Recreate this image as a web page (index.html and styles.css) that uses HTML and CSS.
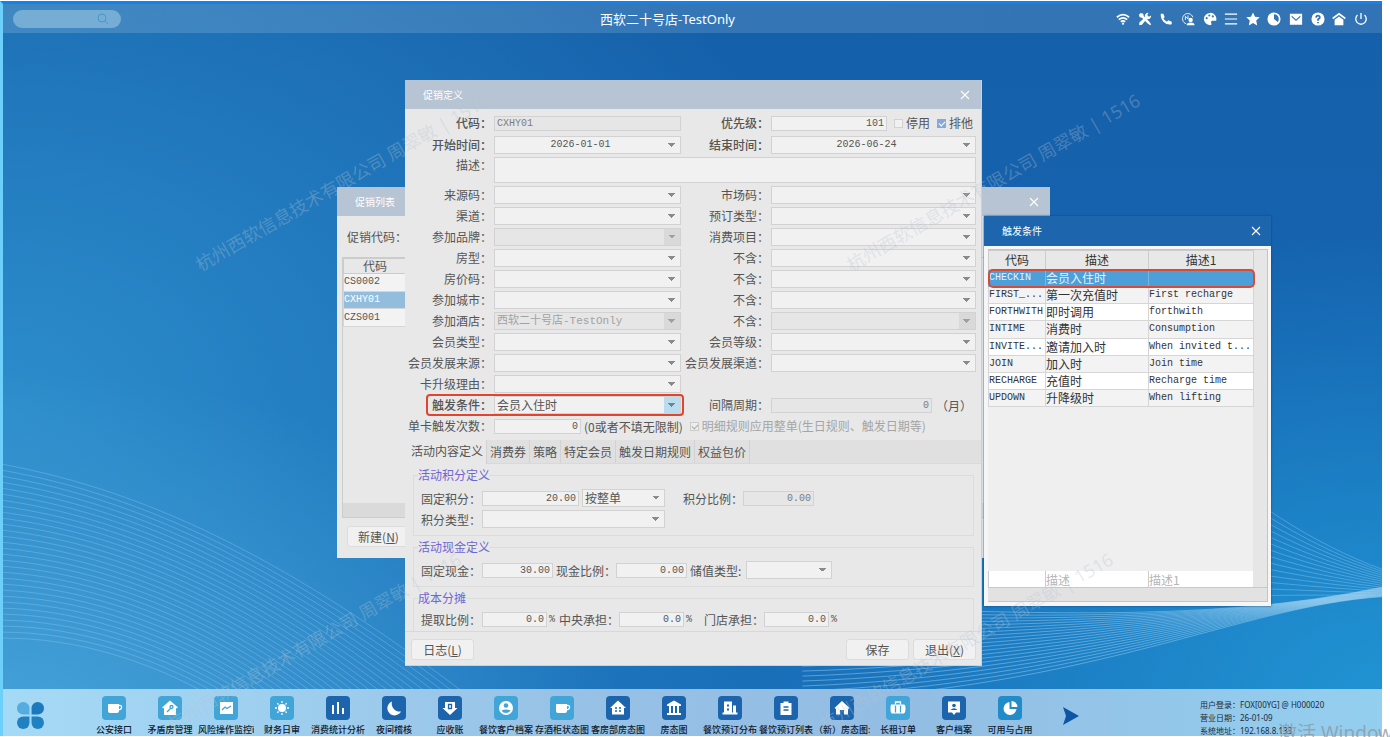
FILE: index.html
```html
<!DOCTYPE html>
<html lang="zh-CN">
<head>
<meta charset="utf-8">
<title>西软二十号店-TestOnly</title>
<link rel="stylesheet" href="styles.css">
</head>
<body>
<svg width="0" height="0" class="defs" aria-hidden="true">
  <symbol id="close" viewBox="0 0 10 10"><path d="M1 1l8 8M9 1l-8 8" fill="none" stroke="currentColor" stroke-width="1.1"/></symbol>
</svg>
<div class="desktop">
  <svg class="waves" id="waves" viewBox="0 0 1380 733" preserveAspectRatio="none" aria-hidden="true"></svg>

  <header class="topbar">
    <label class="search"><input type="search" aria-label="搜索"><svg viewBox="0 0 12 12"><circle cx="5" cy="5" r="4"/><path d="M8 8l3 3"/></svg></label>
    <h1>西软二十号店-TestOnly</h1>
    <nav class="tools">
      <button aria-label="网络"><svg viewBox="0 0 16 16"><path class="s" d="M1 6q7-6 14 0M3.2 8.7q4.800-4 9.600 0M5.500 11.200q2.500-2 5 0"/><circle cx="8" cy="13.300" r="1.300"/></svg></button>
      <button aria-label="设置"><svg viewBox="0 0 16 16"><path d="M1 3l2-2 3 1 .5 2.500L13 11l2 3-1 1-3-2-6.500-6.500L2 6zM15 4a3.800 3.800 0 0 1-5 4L4.500 14.500 1.500 15 1.500 12 8 6a3.800 3.800 0 0 1 4-5l-1.500 2.500 2 2z"/></svg></button>
      <button aria-label="电话"><svg viewBox="0 0 16 16"><path d="M2 2h3l1.500 4L5 7.500Q6.500 10 9 11l1.500-1.500L14.500 11v3q-6 1-9.500-3T2 2z"/></svg></button>
      <button aria-label="客服"><svg viewBox="0 0 16 16"><path class="s t" d="M6 13.500A6 6 0 1 1 13.500 6M5 9V5l3 3V4"/><circle cx="11" cy="9" r="2.500"/><path d="M6.500 15q0-3 4.500-3t4.500 3z"/></svg></button>
      <button aria-label="主题"><svg viewBox="0 0 16 16"><path fill-rule="evenodd" d="M8 1a7 7 0 1 0 0 14c2 0 2-1.500 1.300-2.500-.6-1.500.5-2.500 2-2.500H15A7 7 0 0 0 8 1zM3 7a1.200 1.200 0 1 1 2.400 0A1.200 1.200 0 0 1 3 7zm3-3a1.200 1.200 0 1 1 2.400 0A1.200 1.200 0 0 1 6 4zm4 1a1.200 1.200 0 1 1 2.400 0A1.200 1.200 0 0 1 10 5z"/></svg></button>
      <button aria-label="菜单"><svg viewBox="0 0 16 16"><path class="s m" d="M1 2.500h14M1 8h14M1 13.500h14"/></svg></button>
      <button aria-label="收藏"><svg viewBox="0 0 16 16"><path d="M8 .5l2.300 5 5.400.6-4 3.700 1.100 5.500L8 12.600l-4.800 2.700 1.100-5.500-4-3.700 5.400-.6z"/></svg></button>
      <button aria-label="时间"><svg viewBox="0 0 16 16"><circle class="s" cx="8" cy="8" r="6.500"/><path d="M8 1.500a6.500 6.500 0 1 0 5 10.500L8 8z"/></svg></button>
      <button aria-label="邮件"><svg viewBox="0 0 16 16"><path fill-rule="evenodd" d="M1 2h14v12.500H1zM3 4l5 4.500L13 4v1.800L8 10.200 3 5.800z"/></svg></button>
      <button aria-label="帮助"><svg viewBox="0 0 16 16"><circle cx="8" cy="8" r="7.500"/><path class="s d" d="M5.800 6.500Q6 4 8 4t2.200 2Q10.200 7 8 8.500V10M8 11.300v1.500"/></svg></button>
      <button aria-label="首页"><svg viewBox="0 0 16 16"><path class="s" d="M.8 7.500L8 2l7.200 5.500"/><path d="M3 8.800L8 5l5 3.800V15H3z"/></svg></button>
      <button aria-label="退出"><svg viewBox="0 0 16 16"><path class="s p" d="M4 3.500a6 6 0 1 0 8 0M8 1v7"/></svg></button>
    </nav>
  </header>

  <section class="window list-win">
    <div class="bar"><h2>促销列表</h2><button aria-label="关闭"><svg><use href="#close"/></svg></button></div>
    <div class="list-body">
      <span class="list-label">促销代码：</span>
      <div class="list-box">
        <table>
          <thead><tr><th>代码</th></tr></thead>
          <tbody><tr><td>CS0002</td></tr><tr class="sel"><td>CXHY01</td></tr><tr><td>CZS001</td></tr></tbody>
        </table>
        <div class="hbar"></div>
      </div>
      <button class="btn">新建(<u>N</u>)</button>
    </div>
  </section>

  <section class="window dialog">
    <div class="bar"><h2>促销定义</h2><button aria-label="关闭"><svg><use href="#close"/></svg></button></div>
    <form>
      <div class="fields">
        <label class="b" for="code">代码：</label><input id="code" class="low" value="CXHY01" disabled>
        <label class="b" for="prio">优先级：</label>
        <div class="line"><input id="prio" class="low num grow" value="101">
          <input type="checkbox" id="stop"><label for="stop">停用</label>
          <input type="checkbox" id="excl" checked><label class="flag" for="excl">排他</label></div>
        <label class="b" for="from">开始时间：</label><select id="from" class="date"><option>2026-01-01</option></select>
        <label class="b" for="to">结束时间：</label><select id="to" class="date"><option>2026-06-24</option></select>
        <label for="desc" class="top">描述：</label><textarea id="desc"></textarea>
        <label for="f1">来源码：</label><select id="f1"></select>
        <label for="g1">市场码：</label><select id="g1"></select>
        <label for="f2">渠道：</label><select id="f2"></select>
        <label for="g2">预订类型：</label><select id="g2"></select>
        <label for="f3">参加品牌：</label><select id="f3" disabled></select>
        <label for="g3">消费项目：</label><select id="g3"></select>
        <label for="f4">房型：</label><select id="f4"></select>
        <label for="g4">不含：</label><select id="g4"></select>
        <label for="f5">房价码：</label><select id="f5"></select>
        <label for="g5">不含：</label><select id="g5"></select>
        <label for="f6">参加城市：</label><select id="f6"></select>
        <label for="g6">不含：</label><select id="g6"></select>
        <label for="f7">参加酒店：</label><select id="f7" class="mix" disabled><option>西软二十号店-TestOnly</option></select>
        <label for="g7">不含：</label><select id="g7" disabled></select>
        <label for="f8">会员类型：</label><select id="f8"></select>
        <label for="g8">会员等级：</label><select id="g8"></select>
        <label for="f9">会员发展来源：</label><select id="f9"></select>
        <label for="g9">会员发展渠道：</label><select id="g9"></select>
        <label for="f10">卡升级理由：</label><select id="f10"></select><span class="blank"></span>
        <div class="marked"><label class="b" for="trig">触发条件：</label><select id="trig" class="active"><option>会员入住时</option></select></div>
        <label for="gap">间隔周期：</label><div class="line"><input id="gap" class="low num w161" value="0" disabled><span class="month">（月）</span></div>
        <label for="cnt">单卡触发次数：</label>
        <div class="line span3"><input id="cnt" class="low num w87" value="0"><span class="note">(0或者不填无限制)</span>
          <input type="checkbox" id="whole" checked disabled><label class="dim" for="whole">明细规则应用整单(生日规则、触发日期等)</label></div>
      </div>

      <div class="tabs" role="tablist">
        <button type="button" role="tab" aria-selected="true">活动内容定义</button><button type="button" role="tab">消费券</button><button type="button" role="tab">策略</button><button type="button" role="tab">特定会员</button><button type="button" role="tab">触发日期规则</button><button type="button" role="tab">权益包价</button>
      </div>

      <div class="panel">
        <fieldset>
          <legend>活动积分定义</legend>
          <div class="line"><label class="lead" for="p1">固定积分：</label><input id="p1" class="low num w97" value="20.00"><select class="w83 after" aria-label="方式"><option>按整单</option></select><label class="wide-gap" for="p2">积分比例：</label><input id="p2" class="low num w71" value="0.00" disabled></div>
          <div class="line"><label class="lead" for="p3">积分类型：</label><select id="p3" class="w183"></select></div>
        </fieldset>
        <fieldset>
          <legend>活动现金定义</legend>
          <div class="line"><label class="lead" for="c1">固定现金：</label><input id="c1" class="low num w71" value="30.00"><label class="after" for="c2">现金比例：</label><input id="c2" class="low num w71" value="0.00"><label class="after type" for="c3">储值类型:</label><select id="c3" class="w86"></select></div>
        </fieldset>
        <fieldset class="last">
          <legend>成本分摊</legend>
          <div class="line"><label class="lead" for="s1">提取比例：</label><input id="s1" class="low num w65" value="0.0"><span class="pct">%</span><label for="s2">中央承担：</label><input id="s2" class="low num w65" value="0.0"><span class="pct far">%</span><label for="s3">门店承担：</label><input id="s3" class="low num w65" value="0.0"><span class="pct">%</span></div>
        </fieldset>
      </div>
      <footer class="actions"><button type="button" class="btn">日志(<u>L</u>)</button><span class="grow"></span><button type="button" class="btn">保存</button><button type="button" class="btn">退出(<u>X</u>)</button></footer>
    </form>
  </section>

  <section class="window picker">
    <div class="bar"><h2>触发条件</h2><button aria-label="关闭"><svg><use href="#close"/></svg></button></div>
    <div class="picker-body">
      <div class="picker-main">
        <table>
          <colgroup><col class="c1"><col class="c2"><col class="c3"></colgroup>
          <thead><tr><th>代码</th><th>描述</th><th>描述1</th></tr></thead>
          <tbody>
            <tr class="sel"><td>CHECKIN</td><td>会员入住时</td><td></td></tr>
            <tr><td>FIRST_...</td><td>第一次充值时</td><td>First recharge</td></tr>
            <tr><td>FORTHWITH</td><td>即时调用</td><td>forthwith</td></tr>
            <tr><td>INTIME</td><td>消费时</td><td>Consumption</td></tr>
            <tr><td>INVITE...</td><td>邀请加入时</td><td>When invited t...</td></tr>
            <tr><td>JOIN</td><td>加入时</td><td>Join time</td></tr>
            <tr><td>RECHARGE</td><td>充值时</td><td>Recharge time</td></tr>
            <tr><td>UPDOWN</td><td>升降级时</td><td>When lifting</td></tr>
          </tbody>
        </table>
        <div class="filters"><input aria-label="代码"><input placeholder="描述" aria-label="描述"><input placeholder="描述1" aria-label="描述1"></div>
      </div>
      <div class="hbar"></div>
    </div>
  </section>

  <footer class="taskbar">
    <button class="start" aria-label="开始"><svg viewBox="0 0 26 26"><path fill="#55addf" d="M12 12H6a6 6 0 1 1 6-6z"/><path fill="#1d79bd" d="M14 12h6a6 6 0 1 0-6-6z"/><path fill="#1f80c2" d="M12 14H6a6 6 0 1 0 6 6z"/><path fill="#1f80c2" d="M14 14h6a6 6 0 1 1-6 6z"/></svg></button>
    <nav class="apps">
      <a href="#" class="l"><svg viewBox="0 0 24 24"><path d="M6 8h11v7q0 2-2 2H8q-2 0-2-2z"/><path class="s" d="M17 9.500q3-.5 2.500 2t-2.500 2"/></svg><span>公安接口</span></a>
      <a href="#" class="l"><svg viewBox="0 0 24 24"><path d="M12 4.500l8 7-2 1V19H6v-6.500l-2-1z"/><path class="s c" d="M9 16l4-4"/><circle class="s c" cx="13.500" cy="11" r="1.500"/></svg><span>矛盾房管理</span></a>
      <a href="#" class="l"><svg viewBox="0 0 24 24"><path d="M6 6h13v12H6z"/><path class="s c" d="M8 14l3-3 2 1.500 4-2.500"/></svg><span>风险操作监控ì</span></a>
      <a href="#" class="l"><svg viewBox="0 0 24 24"><circle cx="12" cy="12" r="4"/><path class="s" d="M12 5v2M12 17v2M5 12h2M17 12h2M7.300 7.300l1.200 1.200M15.500 15.500l1.200 1.200M7.300 16.700l1.200-1.200M15.500 8.500l1.200-1.200"/></svg><span>财务日审</span></a>
      <a href="#"><svg viewBox="0 0 24 24"><path class="s w" d="M7 9v9M12 6v12M17 12v6"/></svg><span>消费统计分析</span></a>
      <a href="#"><svg viewBox="0 0 24 24"><path d="M10 5.500a8 8 0 0 0 9 10A7.200 7.200 0 1 1 10 5.500z"/></svg><span>夜间稽核</span></a>
      <a href="#"><svg viewBox="0 0 24 24"><path d="M7 6h10v6h2.500L12 19l-7.500-7H7z"/><path class="s c" d="M10.500 8.500h3v4h-3z"/></svg><span>应收账</span></a>
      <a href="#" class="l"><svg viewBox="0 0 24 24"><circle cx="12" cy="12" r="7"/><circle class="k" cx="12" cy="9.500" r="2.300"/><path class="k" d="M7.500 14.500q4.500-2 9 0-1.500 2.500-4.500 2.500t-4.500-2.500z"/></svg><span>餐饮客户档案</span></a>
      <a href="#" class="l"><svg viewBox="0 0 24 24"><path d="M6 8h11v7q0 2-2 2H8q-2 0-2-2z"/><path class="s" d="M17 9.500q3-.5 2.500 2t-2.500 2"/></svg><span>存酒柜状态图</span></a>
      <a href="#"><svg viewBox="0 0 24 24"><path d="M12 4.500l8 7.500h-2v6.500H6V12H4z"/><path class="s c" d="M9 12h2M13 12h2M9 15h2M13 15h2"/></svg><span>客房部房态图</span></a>
      <a href="#"><svg viewBox="0 0 24 24"><path d="M12 4.500l7 4V10H5V8.500z"/><path class="s w" d="M8 10v7M12 10v7M16 10v7M5 18h14"/></svg><span>房态图</span></a>
      <a href="#"><svg viewBox="0 0 24 24"><path fill-rule="evenodd" d="M6 5.500h8v11h1v-7h3v7h1.500v2h-15v-2H6zm3 3v2h2v-2zm0 4v2h2v-2z"/></svg><span>餐饮预订分布</span></a>
      <a href="#"><svg viewBox="0 0 24 24"><path d="M6.500 7h3V5.500h5V7h3v12h-11z"/><path class="s c" d="M9.500 11h5M9.500 14h5"/></svg><span>餐饮预订列表</span></a>
      <a href="#"><svg viewBox="0 0 24 24"><path d="M12 5l7.500 7-1.500 1v5.500h-4V14h-4v4.500H6V13l-1.500-1z"/></svg><span>（新）房态图:</span></a>
      <a href="#" class="l"><svg viewBox="0 0 24 24"><path d="M6 8.500h12q1.500 0 1.500 4T18 17.500H6q-1.500 0-1.500-5T6 8.500z"/><path class="s" d="M9.500 8.500V6h5v2.500"/><path class="s c" d="M9.500 9.500v7M14.500 9.500v7"/></svg><span>长租订单</span></a>
      <a href="#"><svg viewBox="0 0 24 24"><path d="M6 5.500h12v11h-4L12 19l-2-2.500H6z"/><circle class="k" cx="12" cy="9.500" r="1.800"/><path class="k" d="M8.500 14q3.500-3.500 7 0z"/></svg><span>客户档案</span></a>
      <a href="#" class="m"><svg viewBox="0 0 24 24"><path d="M11.500 6v7h7a6.500 6.500 0 1 1-7-7z"/><path d="M13.500 5a6 6 0 0 1 6 6h-6z"/></svg><span>可用与占用</span></a>
    </nav>
    <button class="more" aria-label="更多"><svg viewBox="0 0 16 18"><path fill="#0d55a5" d="M0 0l16 9-16 9 3-9z"/></svg></button>
    <dl class="info"><dt>用户登录：</dt><dd>FOX[00YG] @ H000020</dd><dt>营业日期：</dt><dd>26-01-09</dd><dt>系统地址：</dt><dd>192.168.8.133</dd></dl>
  </footer>

  <div class="mark m1">杭州西软信息技术有限公司 周翠敏 | 1516</div>
  <div class="mark m2">杭州西软信息技术有限公司 周翠敏 | 1516</div>
  <div class="mark m3">杭州西软信息技术有限公司 周翠敏 | 1516</div>
  <div class="mark m4">杭州西软信息技术有限公司 周翠敏 | 1516</div>
</div>
<div class="activate">激活 Windows</div>
<script src="waves.js"></script>
</body>
</html>
```
FILE: styles.css
```css
* { box-sizing: border-box; }
body { margin: 0; height: 100vh; overflow: hidden; position: relative; background: #fff; padding: 1px 8px 1px 0; font-family: "Noto Sans", "Noto Sans CJK SC", sans-serif; font-size: 12px; color: #555; }
button, input, select, textarea { font: inherit; color: inherit; margin: 0; }
button { border: 0; background: none; padding: 0; }
h1, h2, dl, dd { margin: 0; font-weight: normal; }
.defs { position: absolute; }
.grow { flex: 1; }

.desktop { position: relative; height: 100%; overflow: hidden; display: flex; flex-direction: column; border-top: 3px solid #0d84f5; border-left: 3px solid #6cd0fa;
  background:
    radial-gradient(ellipse 45% 50% at 0% 100%, rgba(80, 172, 222, .8) 0%, rgba(80, 172, 222, 0) 100%),
    radial-gradient(ellipse 62% 90% at 0% 55%, #2c8dcb 0%, rgba(44, 141, 203, 0) 100%),
    radial-gradient(ellipse 45% 65% at 100% 95%, #2093d3 0%, rgba(32, 147, 211, 0) 100%),
    linear-gradient(#1560aa, #1563b0 50%, #1a70ba); }
.waves { position: absolute; inset: 0; width: 100%; height: 100%; }
.waves path { fill: none; stroke: #a8d6f4; stroke-width: 1; }

.topbar { position: relative; flex: none; height: 29px; display: grid; grid-template-columns: 1fr auto 1fr; align-items: center; padding: 0 14px 0 10px; background: linear-gradient(90deg, rgba(255, 255, 255, .15), rgba(255, 255, 255, .12)); color: #fff; }
.topbar h1 { font-size: 13px; line-height: 20px; padding-right: 46px; }
.search { width: 108px; height: 18px; border-radius: 9px; background: #75add5; display: flex; align-items: center; padding: 0 12px; }
.search input { flex: 1; min-width: 0; border: 0; background: none; outline: 0; height: 16px; padding: 0; }
.search svg { width: 12px; height: 12px; fill: none; stroke: #4797c9; stroke-width: 1; }
.tools { justify-self: end; width: 252px; display: flex; justify-content: space-between; }
.tools button { height: 14px; color: #fff; }
.tools svg { display: block; width: 14px; height: 14px; fill: #fff; }
.tools .s { fill: none; stroke: #fff; stroke-width: 2; }
.tools .p { stroke-width: 1.5; }
.tools .m { stroke-width: 1.3; }
.tools .t { stroke-width: 1; }
.tools .d { stroke: #3272b4; }

.window { position: absolute; background: #e8e8e8; display: flex; flex-direction: column; font-family: "Noto Sans CJK SC", sans-serif; }
.bar { flex: none; display: flex; align-items: center; justify-content: space-between; height: 29px; padding: 0 11px 0 18px; background: #b6c4d3; color: #fff; }
.bar h2 { font-size: 10px; line-height: 16px; }
.bar svg { display: block; width: 10px; height: 10px; }

/* promotion list */
.list-win { left: 334px; top: 183px; width: 713px; height: 371px; }
.list-body { flex: 1; display: flex; flex-direction: column; align-items: flex-start; padding: 12px 5px 11px; }
.list-label { line-height: 18px; padding-left: 5px; margin-bottom: 11px; }
.list-box { flex: 1; align-self: stretch; display: flex; flex-direction: column; justify-content: space-between; border: 1px solid #ccc; margin-bottom: 8px; }
.list-box table { width: 64px; height: 69px; }
.list-body .btn { margin-left: 5px; }
table { border-collapse: collapse; table-layout: fixed; line-height: 14px; }
th { font-weight: normal; padding: 0; border: 1px solid #ccc; background: #e8e8e8; }
td { padding: 0; border: 1px solid #d6d6d6; background: #f3f3f3; white-space: nowrap; overflow: hidden; font-family: "Liberation Mono", "Noto Sans CJK SC", monospace; font-size: 10px; line-height: 14px; }
.list-box .sel td { background: #93bddd; color: #fff; }
.hbar { height: 14px; background: #dadada; }

/* buttons and fields */
.btn { height: 21px; min-width: 63px; border: 1px solid #dcdcdc; border-radius: 3px; background: #f1f1f1; line-height: 18px; }
input, select, textarea { border: 1px solid #d2d2d2; background: #f1f1f1; padding: 0 2px; outline: 0; border-radius: 0; min-width: 0; }
textarea { resize: none; }
select { --arrow: #8a8a8a; --box: transparent; appearance: none; height: 18px; width: 100%; line-height: 16px; padding-right: 16px;
  background-image: linear-gradient(to bottom right, var(--arrow) 50%, transparent 50%), linear-gradient(to bottom left, var(--arrow) 50%, transparent 50%), linear-gradient(var(--box), var(--box));
  background-size: 4px 4px, 4px 4px, 16px 16px;
  background-position: right 4px center, right 8px center, right center;
  background-repeat: no-repeat; }
select:disabled { --arrow: #a0a0a0; --box: #d9d9d9; opacity: 1; color: #a2a2a2; background-color: #e6e6e6; }
select.active { --arrow: #6f8590; --box: #b9dcee; }
select.date { text-align-last: center; font-family: "Liberation Mono", monospace; font-size: 10px; }
select.mix { font-family: "Liberation Mono", "Noto Sans CJK SC", monospace; font-size: 11px; }
.low { height: 15px; line-height: 13px; font-family: "Liberation Mono", monospace; font-size: 10px; }
.low:disabled { background: #e6e6e6; color: #7c7c7c; }
.num { text-align: right; }
input[type="checkbox"] { appearance: none; flex: none; width: 9px; height: 9px; padding: 0; }
input[type="checkbox"]:checked { background: #86a8dc; border-color: #86a8dc; position: relative; }
input[type="checkbox"]:checked::after { content: ""; position: absolute; left: 2px; top: 0; width: 3px; height: 5px; border: solid #fff; border-width: 0 1px 1px 0; transform: rotate(45deg); }
input[type="checkbox"]:checked:disabled { background: #ededed; border-color: #ccc; }
input[type="checkbox"]:checked:disabled::after { border-color: #aaa; }
.w65 { width: 65px; } .w71 { width: 71px; } .w83 { width: 83px; } .w86 { width: 86px; } .w87 { width: 87px; }
.w97 { width: 97px; } .w161 { width: 161px; } .w183 { width: 183px; }

/* promotion dialog */
.dialog { left: 402px; top: 76px; width: 577px; border: solid #c6d2dc; border-width: 0 1px 1px 0; }
.fields { display: grid; grid-template-columns: 89px 187px 90px minmax(0, 1fr); grid-template-rows: 20px 18px 26px; grid-auto-rows: 18px; row-gap: 3px; padding: 4px 5px 0 0; align-items: center; }
.fields label { line-height: 16px; white-space: nowrap; }
.fields > label, .marked > label { text-align: right; padding-right: 2px; }
.fields > .low { width: 100%; }
.b { font-weight: 500; }
.top { align-self: start; }
.fields textarea { grid-column: span 3; height: 26px; }
.blank { grid-column: span 2; }
.marked { grid-column: span 2; display: grid; grid-template-columns: subgrid; align-items: center; position: relative; }
.marked::after { content: ""; position: absolute; inset: -2px -3px -2px 21px; border: 2px solid #e2452f; border-radius: 4px; pointer-events: none; }
.line { display: flex; align-items: center; white-space: nowrap; height: 18px; }
.line input[type="checkbox"] { margin: 0 3px 0 7px; }
.flag { padding-right: 3px; }
.span3 { grid-column: span 3; }
.month { padding-left: 4px; }
.note { padding-left: 3px; }
.dim { color: #a5a5a5; }
.tabs { display: flex; align-items: stretch; height: 24px; margin-top: 5px; background: #e0e0e0; border-bottom: 1px solid #d9d9d9; }
.tabs button { padding: 0 3px; border-right: 1px solid #d2d2d2; line-height: 20px; }
.tabs button[aria-selected="true"] { background: #e8e8e8; padding: 0 3px 2px 6px; margin-bottom: -1px; }
.panel { padding: 3px 7px 0 8px; border-bottom: 1px solid #d8d8d8; }
fieldset { margin: 0 0 3px; min-width: 0; border: 1px solid #dcdcdc; padding: 6px 0 7px 7px; }
fieldset.last { padding-bottom: 3px; padding-top: 4px; margin: 0; border-bottom: 0; }
fieldset .line + .line { margin-top: 3px; }
legend { padding: 0; margin-left: -3px; line-height: 16px; color: #7166d0; }
fieldset select { flex: none; }
select.w83 { width: 83px; } select.w86 { width: 86px; } select.w183 { width: 183px; }
.lead { width: 61px; }
.after { margin-left: 3px; }
.wide-gap { margin-left: 18px; }
.type { margin-right: 5px; }
.pct { width: 12px; padding-left: 2px; font-size: 10px; font-family: "Liberation Mono", monospace; }
.pct.far { width: 20px; }
.actions { display: flex; gap: 4px; padding: 7px 5px 5px 6px; }

/* trigger picker */
.picker { left: 981px; top: 212px; width: 287px; height: 390px; background: #f6f6f6; box-shadow: 0 0 2px #0c4680; }
.picker .bar { height: 30px; background: #1d66ad; padding-right: 10px; }
.picker-body { flex: 1; margin: 3px 3px 4px 4px; display: flex; flex-direction: column; border: 1px solid #c4c4c4; border-left: 0; background: #e6e6e6; color: #333; }
.picker-main { flex: 1; display: flex; flex-direction: column; justify-content: space-between; width: 265px; background: #efefef; }
.picker table { width: 100%; height: 157px; }
.picker th { height: 19px; }
.c1 { width: 57px; } .c2 { width: 103px; } .c3 { width: 105px; }
.picker td:nth-child(2) { font-family: "Noto Sans CJK SC", sans-serif; font-size: 12px; }
.picker tr:nth-child(odd) td { background: #fff; }
.picker tr.sel td { background: #4c9fd8; color: #e6f3fc; border-color: #77b5e0; }
.picker tr.sel { outline: 2px solid #d94a36; outline-offset: -1px; border-radius: 4px; }
.picker .hbar { background: #e2e2e2; border-top: 1px solid #c9c9c9; }
.filters { display: grid; grid-template-columns: 57px 103px 1fr; height: 16px; }
.filters input { border: 0; border-left: 1px solid #ccc; background: #fff; padding: 0; height: 16px; }
.filters ::placeholder { color: #b5b5b5; }

/* taskbar */
.taskbar { position: relative; margin-top: auto; flex: none; height: 47px; display: flex; align-items: flex-start; overflow: hidden; padding: 0 14px 0 14px; background: linear-gradient(90deg, #a5daf6, #96c0e5 45%, #93bde3 65%, #94cfef); color: #1d2b3a; }
.start { width: 27px; margin-top: 13px; }
.start svg { display: block; width: 27px; height: 27px; }
.apps { display: flex; margin: 7px 0 0 42px; }
.apps a { width: 56px; display: flex; flex-direction: column; align-items: center; color: #10202f; text-decoration: none; font-size: 9px; line-height: 12px; white-space: nowrap; --tile: #1c65ad; }
.apps .l { --tile: #41a5d7; }
.apps .m { --tile: #218cc8; }
.apps span { font-weight: 500; margin-top: 4px; max-width: 56px; overflow: hidden; }
.apps svg { width: 24px; height: 24px; border-radius: 4px; background: var(--tile); fill: #fff; }
.apps .s { fill: none; stroke: #fff; stroke-width: 1.3; }
.apps .w { stroke-width: 2; }
.apps .c { stroke: var(--tile); }
.apps .k { fill: var(--tile); }
.more { margin: 18px 0 0 25px; }
.more svg { display: block; width: 16px; height: 18px; }
.info { margin: 9px 38px 0 auto; display: grid; grid-template-columns: 40px 90px; font-size: 8px; line-height: 13px; white-space: nowrap; }

.mark { position: absolute; font-size: 18px; line-height: 24px; white-space: nowrap; color: rgba(182, 196, 210, .32); transform: rotate(-30deg); transform-origin: 0 50%; pointer-events: none; }
.m1 { left: 194px; top: 250px; }
.m2 { left: 845px; top: 250px; }
.m3 { left: 166px; top: 709px; }
.m4 { left: 818px; top: 709px; }
.activate { position: absolute; left: 1278px; top: 720px; font-size: 19px; line-height: 26px; color: rgba(140, 150, 160, .75); white-space: nowrap; }
```
FILE: waves.js
```js
const svg = document.getElementById("waves");

function line(points, opacity) {
  const p = document.createElementNS("http://www.w3.org/2000/svg", "path");
  const [a, b, c, d] = points;
  p.setAttribute("d", `M${a} C${b} ${c} ${d}`);
  p.setAttribute("opacity", opacity);
  svg.appendChild(p);
}

// Left fan: spreads from the left edge down towards the middle.
for (let i = 0; i < 30; i++) {
  const y = 461 + i * 6;
  line([[0, y], [150, y + 28 - i], [300, 560 + i * 6], [520 - i * 6, 735 + i * 3]], 0.3);
}

// Right ribbon: crosses over itself near the right edge.
for (let i = 0; i < 20; i++) {
  line([[800, 603 + i * 5], [1000 + i * 5, 608 + i * 4], [1200 + i * 2, 622 - i], [1380, 584 + i / 2]], 0.45);
}
for (let i = 0; i < 14; i++) {
  line([[1180, 440 + i * 12], [1250, 500 + i * 7], [1310, 540 + i * 4], [1380, 566 + i * 2]], 0.35);
}
```
